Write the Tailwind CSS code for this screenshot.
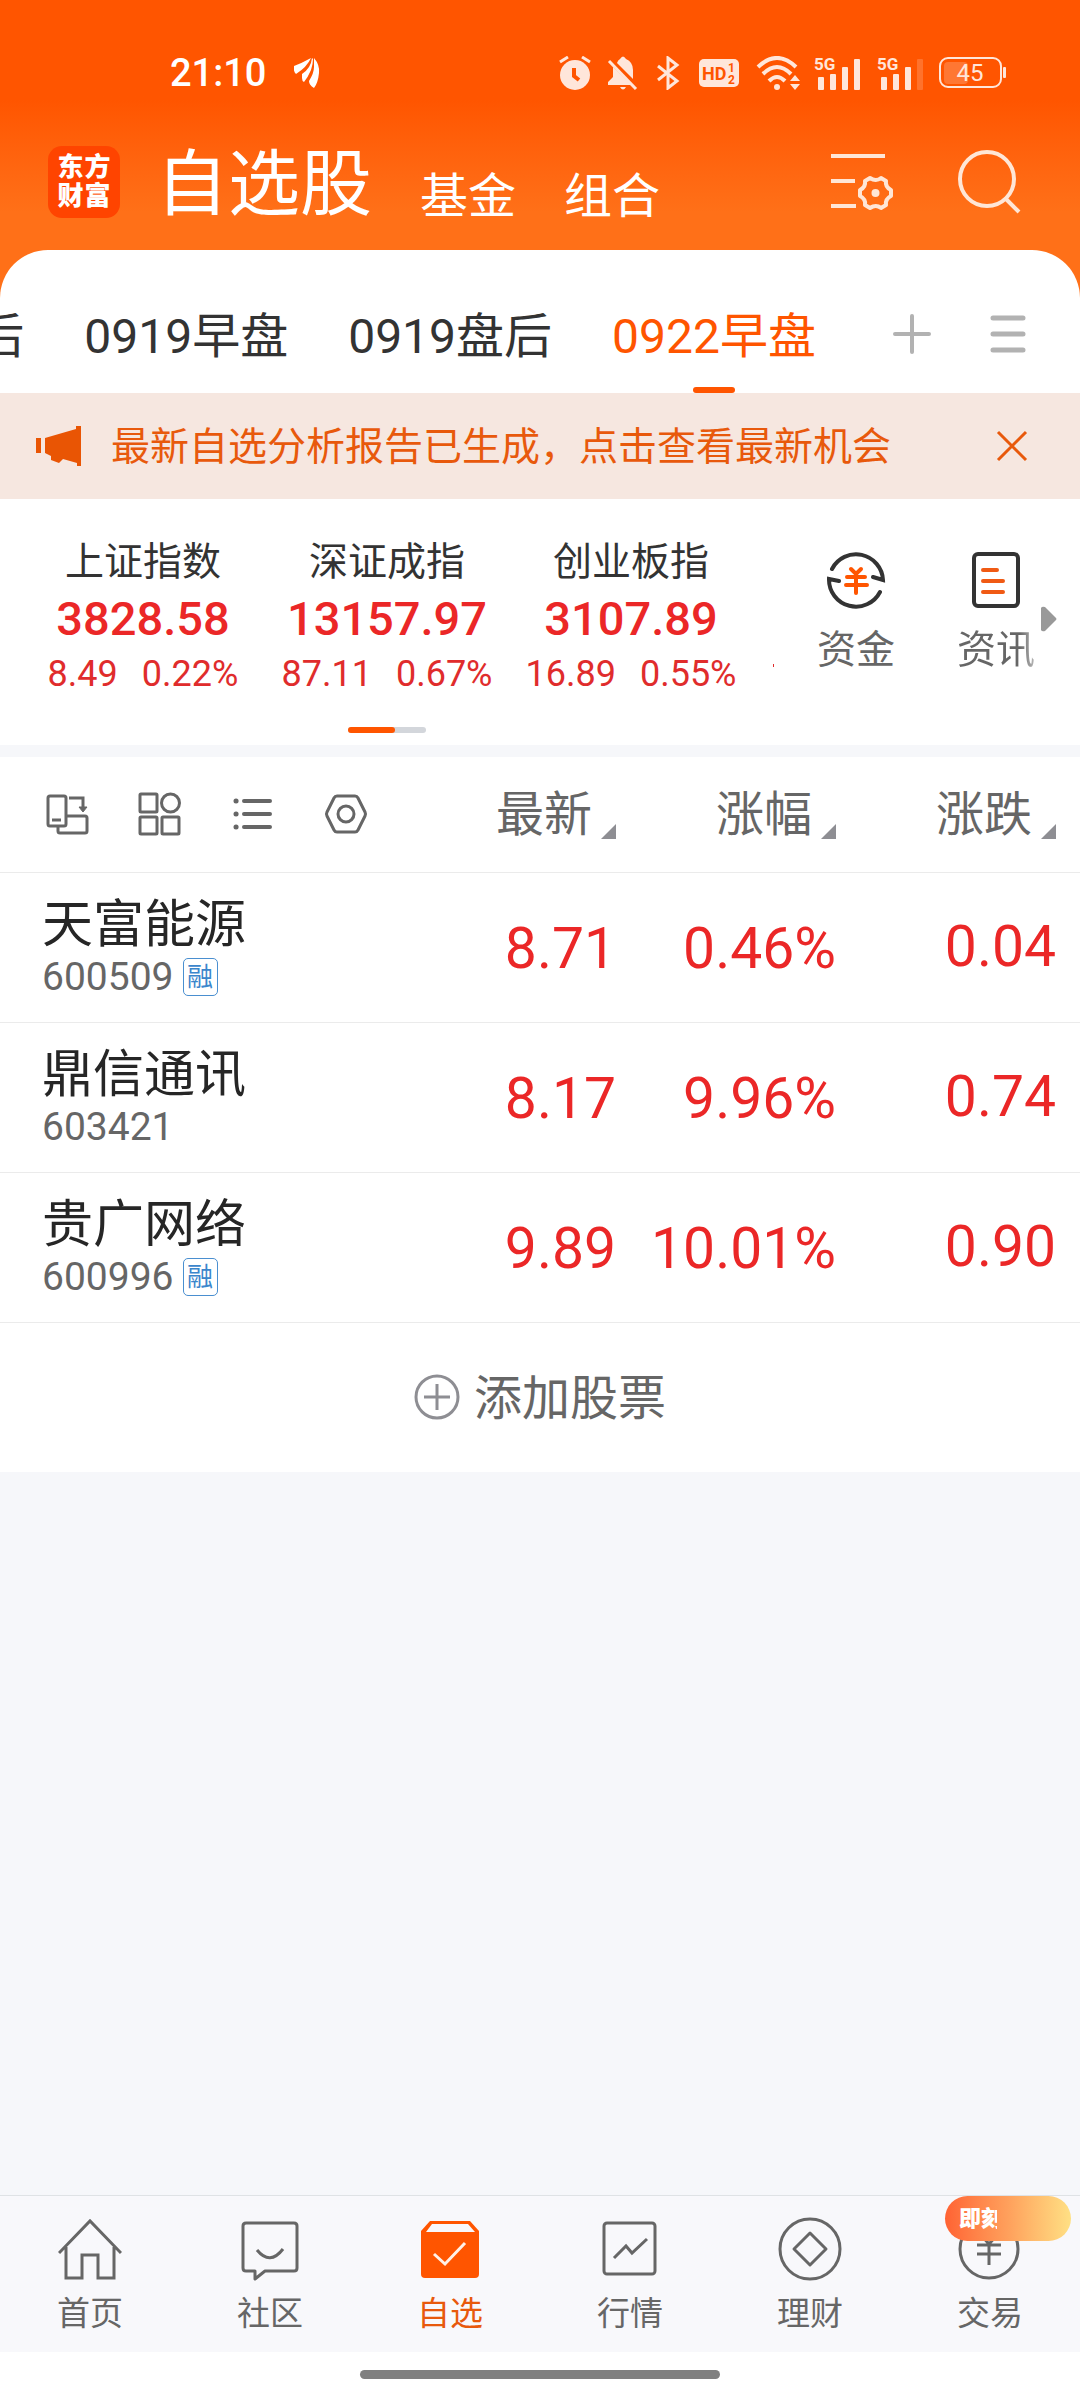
<!DOCTYPE html>
<html lang="zh-CN">
<head>
<meta charset="utf-8">
<meta name="viewport" content="width=device-width, initial-scale=1">
<title>自选股</title>
<script src="https://cdn.jsdelivr.net/npm/@tailwindcss/browser@4"></script>
</head>
<body class="flex min-h-screen flex-col bg-[#f6f7fa] font-['Roboto','Noto_Sans_CJK_SC',sans-serif] text-[#333]">

<header class="bg-linear-to-b from-[#ff5500] from-40% to-[#ff7018] to-85% text-white">
  <!-- Status bar -->
  <div class="flex h-[146px] items-start justify-between pt-[51px] pl-[170px] pr-[73px]">
    <div class="flex items-center gap-7">
      <span class="text-[38px] leading-[44px] font-medium">21:10</span>
      <svg class="h-[30px] w-[26px]" viewBox="0 0 26 30" fill="#fff"><path d="M0 8Q8 5 17 0Q13 9 2 16Q-1 13 0 8Z"/><path d="M18 0Q17 10 8 16L8 20Q8 23 10 24Q14 19 17 12Q19 6 19 1Z"/><path d="M20 0Q26 7 25 15Q24 25 20 30Q15 27 15 23Q20 15 20 9Z"/></svg>
    </div>
    <div class="flex h-[44px] items-center gap-4 text-[#ffe6da]">
      <svg class="h-[34px] w-8" viewBox="0 0 32 34"><circle cx="16" cy="19" r="15" fill="currentColor"/><path d="M1 6L9 1M31 6L23 1" stroke="currentColor" stroke-width="3"/><path d="M15 12V20L20 24" fill="none" stroke="#ff5500" stroke-width="4"/></svg>
      <svg class="h-[34px] w-8" viewBox="0 0 32 34" fill="currentColor"><path d="M13 3Q16-2 19 3Q26 6 26 14V23L10 7Q11 4 13 3ZM6 11L24 29H1V26L6 21ZM13 31H19Q16 36 13 31Z"/><path d="M2 5L29 33" stroke="currentColor" stroke-width="3"/></svg>
      <svg class="h-[34px] w-7" viewBox="0 0 28 34" fill="none" stroke="currentColor" stroke-width="3"><path d="M3 10L22 25L13 32V2L22 9L3 24"/></svg>
      <svg class="h-[30px] w-10" viewBox="0 0 40 30"><rect y="1" width="40" height="28" rx="5" fill="currentColor"/><g fill="#ff5500" font-family="Roboto" font-weight="700"><text x="3" y="22" font-size="18">HD</text><text x="29" y="14" font-size="12">1</text><text x="29" y="26" font-size="12">2</text></g></svg>
      <svg class="h-[34px] w-[46px]" viewBox="0 0 46 34" fill="none" stroke="currentColor" stroke-width="4"><path d="M3 11Q22-7 41 11M8 18Q22 4 36 18M14 25Q22 17 30 25"/><circle cx="22" cy="31" r="3" fill="currentColor" stroke="none"/><path d="M35 25L40 19L45 25ZM35 28L40 34L45 28Z" fill="currentColor" stroke="none"/></svg>
      <svg class="-ml-1 h-9 w-12" viewBox="0 0 48 36" fill="currentColor"><text x="1" y="15" font-family="Roboto" font-size="17" font-weight="700">5G</text><rect x="5" y="22" width="6" height="13" rx="1"/><rect x="17" y="19" width="6" height="16" rx="1"/><rect x="29" y="12" width="6" height="23" rx="1"/><rect x="41" y="4" width="6" height="31" rx="1"/></svg>
      <svg class="h-9 w-[46px]" viewBox="0 0 46 36" fill="currentColor"><text x="0" y="15" font-family="Roboto" font-size="17" font-weight="700">5G</text><rect x="4" y="22" width="6" height="13" rx="1"/><rect x="16" y="19" width="6" height="16" rx="1"/><rect x="28" y="12" width="6" height="23" rx="1"/><rect x="40" y="4" width="6" height="31" rx="1" opacity=".2"/></svg>
      <svg class="h-8 w-[68px]" viewBox="0 0 68 32"><rect x="5" y="5" width="24" height="22" rx="4" fill="#ff7733"/><rect x="1" y="1" width="61" height="29" rx="8" fill="none" stroke="currentColor" stroke-width="2"/><rect x="64" y="10" width="3" height="11" rx="1" fill="currentColor"/><text x="31" y="24" text-anchor="middle" font-family="Roboto" font-size="24" fill="currentColor">45</text></svg>
    </div>
  </div>
  <!-- Title bar -->
  <div class="flex h-[104px] items-start justify-between pr-[59px] pl-12">
    <div class="flex items-start gap-9">
      <div class="grid size-[72px] grid-cols-2 place-content-center justify-items-center rounded-[14px] bg-[#ff4400] px-[9px] text-[26px] leading-[29px] font-black"><span>东</span><span>方</span><span>财</span><span>富</span></div>
      <nav class="flex items-end gap-12 pt-[3px] text-5xl leading-[48px]">
        <a href="#" class="text-7xl leading-[72px]">自选股</a>
        <a href="#">基金</a>
        <a href="#">组合</a>
      </nav>
    </div>
    <div class="flex items-center gap-16 pt-1 text-[#ffe6d6]">
      <button aria-label="管理"><svg class="h-[58px] w-[64px]" viewBox="0 0 64 58" fill="none" stroke="currentColor" stroke-width="4"><path d="M1 3H55M1 28H25M1 53H26"/><path d="M40 25Q46 29 51 25L56 28Q55 34 61 37V43Q55 46 56 52L51 55Q46 51 40 55L35 52Q36 46 30 43V37Q36 34 35 28Z" stroke-linejoin="round"/><circle cx="45.500" cy="40" r="4" fill="currentColor" stroke="none"/></svg></button>
      <button aria-label="搜索"><svg class="h-[64px] w-[63px]" viewBox="0 0 63 64" fill="none" stroke="currentColor" stroke-width="4"><circle cx="29" cy="29" r="27"/><path d="M47 48L61 62"/></svg></button>
    </div>
  </div>
</header>

<main class="flex flex-1 flex-col">
  <!-- Watchlist groups -->
  <div class="bg-[#ff7018]">
    <div class="flex h-[143px] items-end rounded-t-[48px] bg-white">
      <nav class="flex h-full flex-1 justify-end gap-[60px] overflow-hidden pt-[51px] text-5xl leading-[72px] whitespace-nowrap">
        <a href="#">0918盘后</a>
        <a href="#">0919早盘</a>
        <a href="#">0919盘后</a>
        <a href="#" class="flex flex-col items-center justify-between text-[#ff5500]">0922早盘<span class="h-[6px] w-[42px] rounded-full bg-[#ff5500]"></span></a>
      </nav>
      <div class="flex h-full items-center gap-14 pt-6 pr-[52px] pl-[76px]">
        <button aria-label="添加分组"><svg class="size-10" viewBox="0 0 40 40" stroke="#b2b2b2" stroke-width="4" stroke-linecap="round"><path d="M20 2V38M3 20H37"/></svg></button>
        <button aria-label="分组列表"><svg class="size-10" viewBox="0 0 40 40" stroke="#b2b2b2" stroke-width="5" stroke-linecap="round"><path d="M5 4H35M5 20H35M5 36H35"/></svg></button>
      </div>
    </div>
  </div>

  <!-- Report notice -->
  <div class="flex h-[106px] items-center bg-[#f6e7e0] pr-[50px] pl-9 text-[#e8590c]">
    <svg class="mr-[30px] h-10 w-[45px]" viewBox="0 0 45 40" fill="#e95504"><path d="M0 12H5V27H0ZM9 12L40 3V0H45V40H41V37L27 33L23 37L15 34V30L9 27Z"/></svg>
    <a href="#" class="flex-1 pt-[2px] text-[39px] leading-[60px]">最新自选分析报告已生成，点击查看最新机会</a>
    <button aria-label="关闭"><svg class="size-[36px]" viewBox="0 0 36 36" stroke="currentColor" stroke-width="3"><path d="M4 4L32 32M32 4L4 32"/></svg></button>
  </div>

  <!-- Market indices -->
  <section class="flex h-[246px] bg-white pt-[38px]">
    <div class="relative flex-1 overflow-hidden pl-[21px]">
      <div class="grid grid-cols-[244px_244px_244px] text-center text-[#e02c2c]">
        <div>
          <h2 class="text-[39px] leading-[50px] text-[#333]">上证指数</h2>
          <p class="text-[47px] leading-[64px] font-medium text-[#eb2727]">3828.58</p>
          <p class="flex justify-center gap-6 text-4xl leading-[46px]"><span>8.49</span><span>0.22%</span></p>
        </div>
        <div>
          <h2 class="text-[39px] leading-[50px] text-[#333]">深证成指</h2>
          <p class="text-[47px] leading-[64px] font-medium text-[#eb2727]">13157.97</p>
          <p class="flex justify-center gap-6 text-4xl leading-[46px]"><span>87.11</span><span>0.67%</span></p>
        </div>
        <div>
          <h2 class="text-[39px] leading-[50px] text-[#333]">创业板指</h2>
          <p class="text-[47px] leading-[64px] font-medium text-[#eb2727]">3107.89</p>
          <p class="flex justify-center gap-6 text-4xl leading-[46px]"><span>16.89</span><span>0.55%</span></p>
        </div>
      </div>
      <div class="mt-[30px] flex w-[732px] justify-center"><div class="h-[6px] w-[78px] rounded-full bg-[#d3d6db]"><div class="h-[6px] w-[47px] rounded-full bg-[#ff5500]"></div></div></div>
      <span class="absolute top-[127px] right-0 h-[3px] w-px bg-[#e02c2c]"></span>
    </div>
    <div class="flex w-[306px] text-[39px] leading-[50px] text-[#666]">
      <a href="#" class="ml-[43px] flex w-[78px] flex-col items-center pt-3">
        <svg class="mb-4 h-[60px] w-[60px]" viewBox="0 0 60 60" fill="none" stroke="#333" stroke-width="4" stroke-linecap="round"><path d="M6 20A27 27 0 0 1 57 31L47 28M54 43A27 27 0 0 1 3 30L13 32"/><path d="M25 20L30 25L35 20M21 28H39M20 36H41M30 26V44" stroke="#ff5500"/></svg>
        资金</a>
      <a href="#" class="ml-[62px] flex w-[78px] flex-col items-center pt-3">
        <svg class="mb-4 h-[60px] w-[48px]" viewBox="0 0 48 60" fill="none" stroke="#333" stroke-width="4"><rect x="2" y="5" width="44" height="52" rx="4"/><path d="M11 21H25M11 32H31M11 43H31" stroke="#f05a14" stroke-linecap="round"/></svg>
        <span class="bg-linear-to-r from-[#666] from-80% to-[#bbb] bg-clip-text text-transparent">资讯</span></a>
      <svg class="mt-[69px] ml-[6px] h-[26px] w-4" viewBox="0 0 16 26" fill="#999"><path d="M0 2Q1 0 4 1L15 12Q16 13 15 14L4 25Q1 26 0 24Z"/></svg>
    </div>
  </section>

  <!-- Stocks -->
  <section class="mt-3 bg-white">
    <table class="w-full table-fixed text-right">
      <thead>
        <tr class="h-[115px] border-b border-[#ebebeb] text-5xl text-[#666]">
          <th class="pl-[45px] font-normal">
            <div class="flex items-center gap-[49px]">
              <button aria-label="横屏"><svg class="size-11" viewBox="0 0 44 44" fill="none" stroke="#666" stroke-width="3"><rect x="3" y="4" width="18" height="30" rx="2"/><path d="M7 28H16M21 24H40Q42 24 42 26V39Q42 41 40 41H15Q13 41 13 39V34"/><path d="M24 6H38V16"/><path d="M34 15H42L38 20Z" fill="#666" stroke-width="1"/></svg></button>
              <button aria-label="宫格"><svg class="size-11" viewBox="0 0 44 44" fill="none" stroke="#666" stroke-width="3"><rect x="2" y="2" width="17" height="18" rx="1"/><circle cx="32.500" cy="11" r="9"/><rect x="2" y="25" width="17" height="17" rx="1"/><rect x="24" y="25" width="17" height="17" rx="1"/></svg></button>
              <button aria-label="列表"><svg class="size-11" viewBox="0 0 44 44" stroke="#666" stroke-width="4" stroke-linecap="round"><path d="M13 9H39M13 22H39M13 35H39"/><path d="M5 9H5.100M5 22H5.100M5 35H5.100" stroke-width="5"/></svg></button>
              <button aria-label="设置"><svg class="size-11" viewBox="0 0 44 44" fill="none" stroke="#666" stroke-width="3"><path d="M13 4H31Q33 4 34 6L41 20Q42 22 41 24L34 38Q33 40 31 40H13Q11 40 10 38L3 24Q2 22 3 20L10 6Q11 4 13 4Z"/><circle cx="22" cy="22" r="8"/></svg></button>
            </div>
          </th>
          <th class="w-[220px] pt-[2px] font-normal"><button class="inline-flex items-end gap-[9px] leading-[60px]">最新<svg class="mb-[6px] size-[15px]" viewBox="0 0 15 15" fill="#8e8e93"><path d="M15 0V15H0Z"/></svg></button></th>
          <th class="w-[220px] pt-[2px] font-normal"><button class="inline-flex items-end gap-[9px] leading-[60px]">涨幅<svg class="mb-[6px] size-[15px]" viewBox="0 0 15 15" fill="#8e8e93"><path d="M15 0V15H0Z"/></svg></button></th>
          <th class="w-[244px] pt-[2px] pr-6 font-normal"><button class="inline-flex items-end gap-[9px] leading-[60px]">涨跌<svg class="mb-[6px] size-[15px]" viewBox="0 0 15 15" fill="#8e8e93"><path d="M15 0V15H0Z"/></svg></button></th>
        </tr>
      </thead>
      <tbody class="text-[57px] leading-[64px] text-[#eb2727]">
        <tr class="h-[150px] border-b border-[#ebebeb]">
          <td class="pt-1 pl-[42px] text-left"><div class="text-[51px] leading-[56px] text-[#262626]">天富能源</div><div class="flex h-12 items-center gap-[9px] text-[39px] leading-[48px] text-[#666]">600509<span class="grid h-[38px] w-[35px] place-items-center rounded-[5px] border border-[#4a8fd0] text-[26px] leading-[36px] text-[#3b86cc]">融</span></div></td>
          <td class="pt-1">8.71</td><td class="pt-1">0.46%</td><td class="pr-6">0.04</td>
        </tr>
        <tr class="h-[150px] border-b border-[#ebebeb]">
          <td class="pt-1 pl-[42px] text-left"><div class="text-[51px] leading-[56px] text-[#262626]">鼎信通讯</div><div class="flex h-12 items-center gap-[9px] text-[39px] leading-[48px] text-[#666]">603421</div></td>
          <td class="pt-1">8.17</td><td class="pt-1">9.96%</td><td class="pr-6">0.74</td>
        </tr>
        <tr class="h-[150px] border-b border-[#ebebeb]">
          <td class="pt-1 pl-[42px] text-left"><div class="text-[51px] leading-[56px] text-[#262626]">贵广网络</div><div class="flex h-12 items-center gap-[9px] text-[39px] leading-[48px] text-[#666]">600996<span class="grid h-[38px] w-[35px] place-items-center rounded-[5px] border border-[#4a8fd0] text-[26px] leading-[36px] text-[#3b86cc]">融</span></div></td>
          <td class="pt-1">9.89</td><td class="pt-1">10.01%</td><td class="pr-6">0.90</td>
        </tr>
      </tbody>
    </table>
    <button class="flex h-[149px] w-full items-center justify-center gap-[14px] text-5xl leading-[60px] text-[#666]">
      <svg class="size-[46px]" viewBox="0 0 46 46" fill="none" stroke="#8e8e93" stroke-width="3"><circle cx="23" cy="23" r="21"/><path d="M23 10V36M10 23H36"/></svg><span class="pt-[3px]">添加股票</span></button>
  </section>
</main>

<footer>
  <nav class="grid h-[157px] grid-cols-6 border-t border-[#dfe2e5] bg-[#f8f8fb] text-[33px] leading-[42px] text-[#666]">
    <a href="#" class="flex flex-col items-center pt-[21px]"><svg class="mb-3 size-16" viewBox="0 0 64 64" fill="none" stroke="#666" stroke-width="3"><path d="M1 36L32 4L63 36M8 30V61H24V38H40V61H56V30"/></svg>首页</a>
    <a href="#" class="flex flex-col items-center pt-[21px]"><svg class="mb-3 size-16" viewBox="0 0 64 64" fill="none" stroke="#666" stroke-width="3" stroke-linejoin="round"><path d="M8 6H56Q59 6 59 9V51Q59 54 56 54H27L17 62V54H8Q5 54 5 51V9Q5 6 8 6Z"/><path d="M19 33Q32 49 45 32"/></svg>社区</a>
    <a href="#" class="flex flex-col items-center pt-[21px] text-[#e8590c]"><svg class="mb-3 size-16" viewBox="0 0 64 64" fill="none"><path d="M3 14L12 4H52L61 14V57Q61 61 57 61H7Q3 61 3 57Z" fill="#ff5500"/><path d="M8 15L14 7H50L57 15Z" fill="#f8f8fb"/><path d="M16 37L27 47L47 26" stroke="#fff1e8" stroke-width="3"/></svg>自选</a>
    <a href="#" class="flex flex-col items-center pt-[21px]"><svg class="mb-3 size-16" viewBox="0 0 64 64" fill="none" stroke="#666" stroke-width="3"><rect x="6" y="6" width="51" height="51" rx="3"/><path d="M16 41L28 29L34 36L49 22"/></svg>行情</a>
    <a href="#" class="flex flex-col items-center pt-[21px]"><svg class="mb-3 size-16" viewBox="0 0 64 64" fill="none" stroke="#666" stroke-width="3" stroke-linejoin="round"><circle cx="32" cy="32" r="30"/><path d="M32 16L48 32L32 48L16 32Z"/></svg>理财</a>
    <a href="#" class="relative flex flex-col items-center pt-[21px]"><svg class="mb-3 size-16" viewBox="0 0 64 64" fill="none" stroke="#666" stroke-width="3"><circle cx="31" cy="32" r="29"/><path d="M22 17L31 27L40 17M19 28H43M19 37H43M31 27V48"/></svg>交易<span class="absolute top-0 right-[9px] h-[45px] w-[126px] rounded-full bg-linear-to-r from-[#ff6233] via-[#ffa05c] to-[#ffe084] pl-[14px] text-[22px] leading-[45px] font-black text-white">即<span class="inline-block w-4 overflow-hidden align-top">刻</span></span></a>
  </nav>
  <div class="flex h-12 justify-center bg-white pt-[18px]"><div class="h-[9px] w-1/3 rounded-full bg-[#808080]"></div></div>
</footer>
</body>
</html>
